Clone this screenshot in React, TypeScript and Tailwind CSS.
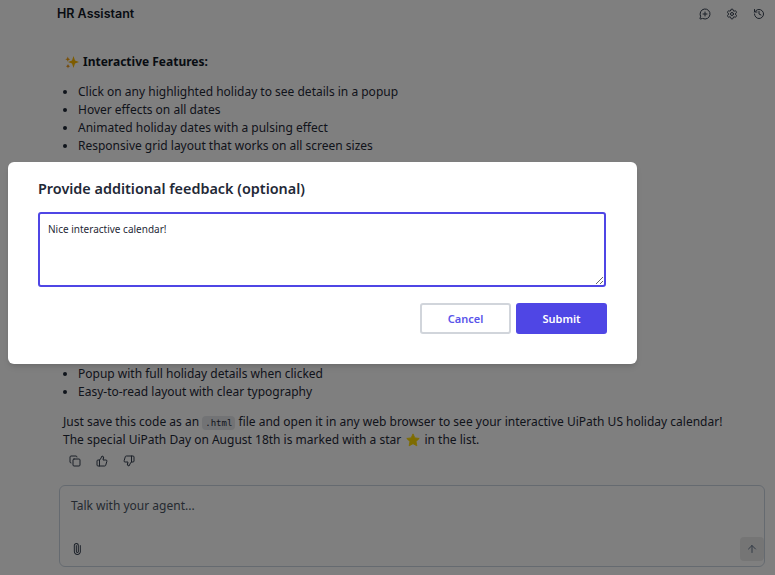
import { ArrowUp, Copy, History, MessageCirclePlus, Paperclip, Settings, ThumbsDown, ThumbsUp } from "lucide-react";

function Sparkles() {
  return (
    <svg width="14" height="14" viewBox="0 0 14 14" className="shrink-0">
      <path d="M8.5 1 L10 5.5 L14 7 L10 8.5 L8.5 13 L7 8.5 L3 7 L7 5.5 Z" fill="#fcb900" />
      <path d="M2.8 1.5 L3.5 3.5 L5.3 4.2 L3.5 4.9 L2.8 6.8 L2.1 4.9 L0.3 4.2 L2.1 3.5 Z" fill="#f59e0b" />
      <path d="M3 9 L3.6 10.6 L5.2 11.2 L3.6 11.8 L3 13.4 L2.4 11.8 L0.8 11.2 L2.4 10.6 Z" fill="#e58a00" />
    </svg>
  );
}

function Star() {
  return (
    <span className="relative mr-[1px] ml-[2px] inline-block h-[10px] w-[14px] align-[-1px]">
      <svg width="14" height="14" viewBox="0 0 24 24" className="absolute top-[-2px] left-0">
        <path
          d="M12 1.5l3.2 6.9 7.5.9-5.5 5.2 1.4 7.5L12 18.3l-6.6 3.7 1.4-7.5L1.300 9.300l7.500-.9z"
          fill="#fdd800"
          stroke="#fdd800"
          strokeWidth="1.500"
          strokeLinejoin="round"
        />
      </svg>
    </span>
  );
}

const topFeatures = [
  "Click on any highlighted holiday to see details in a popup",
  "Hover effects on all dates",
  "Animated holiday dates with a pulsing effect",
  "Responsive grid layout that works on all screen sizes",
];

const bottomFeatures = ["Popup with full holiday details when clicked", "Easy-to-read layout with clear typography"];

function Bullets({ items }: { items: string[] }) {
  return (
    <ul className="list-disc pl-[15px]">
      {items.map((item) => (
        <li key={item}>{item}</li>
      ))}
    </ul>
  );
}

export default function App() {
  return (
    <div className="relative h-[575px] w-[775px] overflow-hidden bg-white font-['Noto_Sans',sans-serif] text-[12px] leading-[18px] text-[#1f2937]">
      <header className="flex h-[27px] items-center justify-between pr-[10px] pl-[57px]">
        <h1 className="font-['Inter',sans-serif] text-[12.500px] font-semibold text-[#111827]">HR Assistant</h1>
        <div className="flex items-center gap-[15px] text-[#374151]">
          <MessageCirclePlus size={12} />
          <Settings size={12} />
          <History size={12} />
        </div>
      </header>

      <main className="pt-[26px] pl-[63px]">
        <div className="flex items-center gap-[4px] pl-[2px]">
          <Sparkles />
          <strong className="text-[12px] font-bold text-[#111827]">Interactive Features:</strong>
        </div>
        <div className="mt-[12px] h-[282px]">
          <Bullets items={topFeatures} />
        </div>
        <Bullets items={bottomFeatures} />
        <p className="mt-[12px] w-[680px]">
          Just save this code as an{" "}
          <code className="rounded bg-[#e5e7eb] px-[3px] py-[2px] font-['DejaVu_Sans_Mono',monospace] text-[9px] leading-none">.html</code>{" "}
          file and open it in any web browser to see your interactive UiPath US holiday calendar!
          <br />
          The special UiPath Day on August 18th is marked with a star <Star /> in the list.
        </p>
        <div className="mt-[6px] flex items-center gap-[15px] pl-[6px] text-[#374151]">
          <Copy size={12} />
          <ThumbsUp size={12} />
          <ThumbsDown size={12} />
        </div>
      </main>

      <div className="mt-[18px] mr-[10px] ml-[59px] flex h-[82px] flex-col justify-between rounded-[6px] border border-[#cbd5e1] pt-[11px] pr-[0px] pb-[5px] pl-[11px]">
        <span className="text-[#4b5563]">Talk with your agent...</span>
        <div className="flex items-end justify-between">
          <Paperclip size={12} className="mb-[6px] -rotate-45 text-[#374151]" />
          <button className="flex h-[24px] w-[24px] items-center justify-center rounded bg-[#ebebeb] text-[#64748b]">
            <ArrowUp size={12} />
          </button>
        </div>
      </div>

      <div className="absolute inset-0 bg-black/50 pt-[162px] pl-[8px]">
        <div className="h-[202px] w-[629px] rounded-[6px] bg-white px-[30px] pt-[16px] shadow-md">
          <h2 className="text-[14.400px] leading-[22px] font-semibold text-[#1f2937]">Provide additional feedback (optional)</h2>
          <textarea
            defaultValue="Nice interactive calendar!"
            className="mt-[12px] block h-[75px] w-[568px] rounded-[3px] border-2 border-[#4f46e5] px-[8px] py-[7px] text-[10px] leading-[16px] text-[#1f2937] outline-none"
          />
          <div className="mt-[16px] flex justify-end gap-[5px]">
            <button className="h-[31px] w-[91px] rounded-[3px] border-2 border-[#d1d5db] bg-white text-[11px] font-semibold text-[#5a55ea]">
              Cancel
            </button>
            <button className="h-[31px] w-[91px] rounded-[3px] bg-[#4f46e5] text-[11px] font-semibold text-white">Submit</button>
          </div>
        </div>
      </div>
    </div>
  );
}
